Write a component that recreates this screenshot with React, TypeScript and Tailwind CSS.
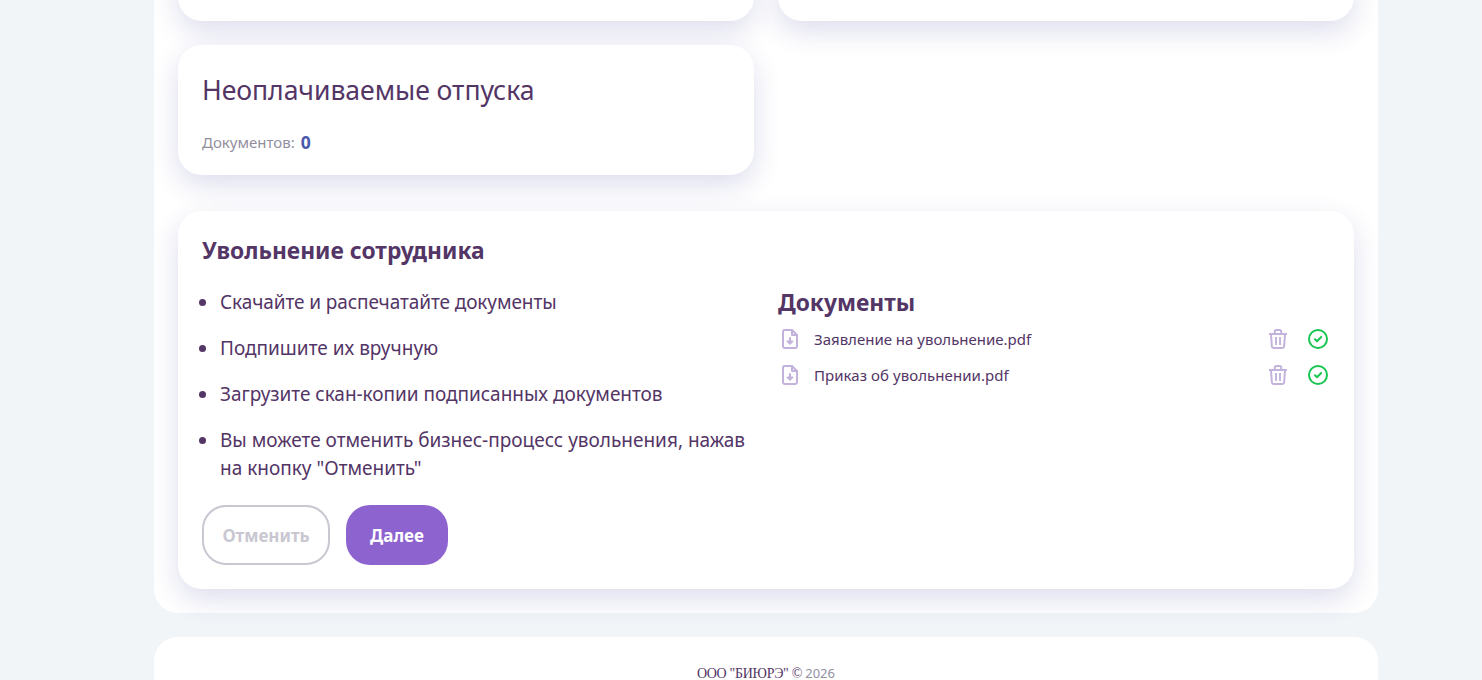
const steps = [
  { text: 'Скачайте и распечатайте документы', spacing: 'tracking-[-0.09px]' },
  { text: 'Подпишите их вручную', spacing: '' },
  { text: 'Загрузите скан-копии подписанных документов', spacing: 'tracking-[-0.03px]' },
  { text: 'Вы можете отменить бизнес-процесс увольнения, нажав\nна кнопку "Отменить"', spacing: '' },
];

const documents = [
  { name: 'Заявление на увольнение.pdf', spacing: '' },
  { name: 'Приказ об увольнении.pdf', spacing: 'tracking-[0.06px]' },
];

function FileIcon() {
  return (
    <svg className="h-6 w-6 shrink-0" viewBox="0 0 24 24" fill="none" stroke="#c3b3dc" strokeWidth="2" strokeLinecap="round" strokeLinejoin="round">
      <path d="M14 3H6.8A1.8 1.8 0 0 0 5 4.8v14.4A1.8 1.8 0 0 0 6.8 21h10.4a1.8 1.8 0 0 0 1.8-1.8V8Z" />
      <path d="M14 3.5V8H18.5" />
      <path d="M12 11v5" />
      <path d="M9.3 14.2L12 16.8l2.7-2.6Z" fill="#c3b3dc" strokeWidth="1.6" />
    </svg>
  );
}

function TrashIcon() {
  return (
    <svg className="h-6 w-6" viewBox="0 0 24 24" fill="none" stroke="#c3b3dc" strokeWidth="2" strokeLinejoin="round">
      <path d="M3 7h18" />
      <path d="M8.8 6.5V4.5A1.5 1.5 0 0 1 10.3 3h3.4a1.5 1.5 0 0 1 1.5 1.5v2" />
      <path d="M5 7.5l.9 12A1.6 1.6 0 0 0 7.5 21h9a1.6 1.6 0 0 0 1.6-1.5l.9-12" />
      <path d="M10 10v8M14 10v8" strokeWidth="1.9" />
    </svg>
  );
}

function CheckIcon() {
  return (
    <svg className="h-6 w-6" viewBox="0 0 24 24" fill="none" stroke="#18c551" strokeWidth="2" strokeLinecap="round" strokeLinejoin="round">
      <circle cx="12" cy="12" r="9" />
      <path d="M9 12.2l2 2 4.2-4.2" />
    </svg>
  );
}

const card = 'rounded-3xl bg-white shadow-[0_10px_28px_rgba(40,45,145,0.16)]';

export default function App() {
  return (
    <div className="h-[680px] overflow-hidden bg-[#f1f5f8] font-['Noto_Sans','Open_Sans',sans-serif] text-[#533566]">
      <div className="ml-[154px] w-[1224px]">
        <main className="rounded-b-3xl bg-white px-6 pb-6">
          <div className="grid grid-cols-2 gap-6">
            <div className={`${card} -mt-10 h-[61px]`} />
            <div className={`${card} -mt-10 h-[61px]`} />
            <section className={`${card} h-[130px] px-6 pt-6`}>
              <h2 className="whitespace-nowrap text-[26.6px] leading-[42px] tracking-[-0.06px]">Неоплачиваемые отпуска</h2>
              <p className="mt-[19px] flex items-center text-[15px] leading-6 text-[#918f9f]">
                <span>Документов:</span>
                <b className="ml-1.5 text-[17.5px] leading-6 text-[#4b57ab]">0</b>
              </p>
            </section>
          </div>

          <section className={`${card} mt-9 h-[378px] px-6 pt-6`}>
            <h3 className="text-[22.8px] leading-8 font-bold">Увольнение сотрудника</h3>
            <div className="mt-[21px] grid grid-cols-2 gap-6">
              <ul className="flex flex-col gap-[18px] text-[19px] leading-7">
                {steps.map(step => (
                  <li key={step.text} className="flex">
                    <span className="mt-[11px] mr-[14px] -ml-[3px] h-[7px] w-[7px] shrink-0 rounded-full bg-[#533566]" />
                    <span className={`whitespace-pre ${step.spacing}`}>{step.text}</span>
                  </li>
                ))}
              </ul>

              <div>
                <h3 className="-mt-px text-[22.8px] leading-8 font-bold">Документы</h3>
                <div className="mt-2 flex flex-col gap-3">
                  {documents.map(doc => (
                    <div key={doc.name} className="flex h-6 items-center">
                      <FileIcon />
                      <span className={`ml-3 text-[15px] leading-6 whitespace-nowrap ${doc.spacing}`}>{doc.name}</span>
                      <div className="ml-auto flex gap-4">
                        <TrashIcon />
                        <CheckIcon />
                      </div>
                    </div>
                  ))}
                </div>
              </div>
            </div>

            <div className="mt-[23px] flex gap-4 text-[17px] font-bold">
              <button className="h-[60px] w-32 rounded-3xl border-2 border-[#c9c7d1] pt-0.5 text-[#c9c7d1]">Отменить</button>
              <button className="h-[60px] w-[102px] rounded-3xl bg-[#8d63cf] pt-0.5 text-white">Далее</button>
            </div>
          </section>
        </main>

        <footer className="mt-6 h-20 rounded-t-3xl bg-white pt-[26px] text-center text-sm leading-5">
          <span className="font-['Liberation_Serif',serif] tracking-[-0.3px]">ООО "БИЮРЭ" © </span>
          <span className="text-[13px] text-[#918f9f]">2026</span>
        </footer>
      </div>
    </div>
  );
}
